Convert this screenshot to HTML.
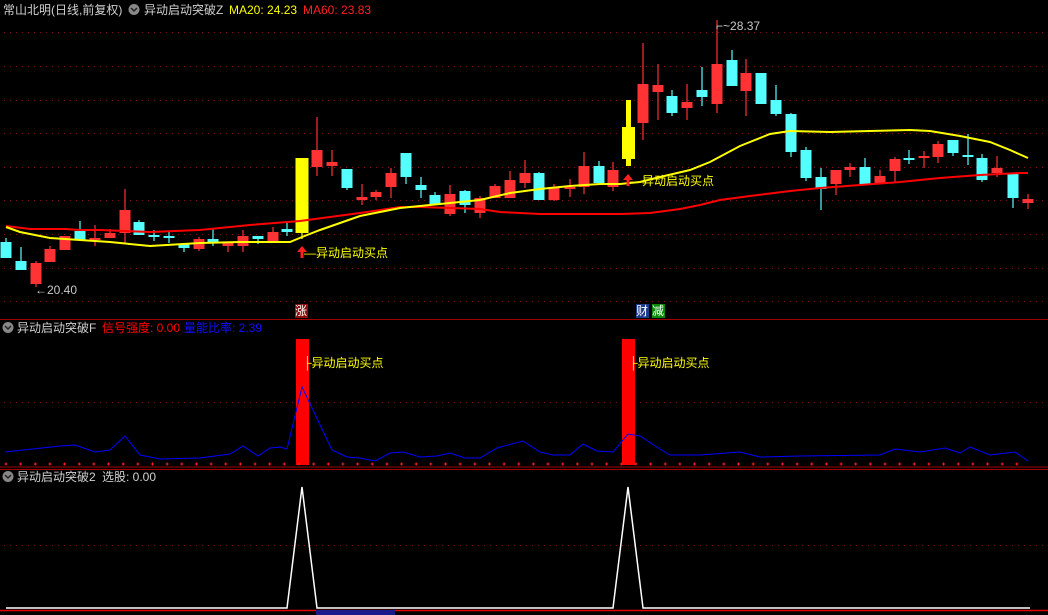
<!DOCTYPE html>
<html><head><meta charset="utf-8"><style>
html,body{margin:0;padding:0;background:#000;width:1048px;height:615px;overflow:hidden}
svg{display:block}
text{font-family:"Liberation Sans","Noto Sans CJK SC",sans-serif;font-size:12px}
</style></head><body>
<svg id="s" width="1048" height="615" xmlns="http://www.w3.org/2000/svg">
<g id="grid" stroke="#8a1010" stroke-width="1" stroke-dasharray="1,5">
<line x1="4" y1="32.5" x2="1048" y2="32.5"/><line x1="4" y1="66.5" x2="1048" y2="66.5"/>
<line x1="4" y1="100.5" x2="1048" y2="100.5"/><line x1="4" y1="133.5" x2="1048" y2="133.5"/>
<line x1="4" y1="167.5" x2="1048" y2="167.5"/><line x1="4" y1="200.5" x2="1048" y2="200.5"/>
<line x1="4" y1="234.5" x2="1048" y2="234.5"/><line x1="4" y1="268.5" x2="1048" y2="268.5"/>
<line x1="4" y1="301.5" x2="1048" y2="301.5"/>
<line x1="4" y1="402.5" x2="1048" y2="402.5"/>
<line x1="4" y1="545.5" x2="1048" y2="545.5"/>
</g>
<line x1="0" y1="319.5" x2="1048" y2="319.5" stroke="#a00000"/>
<line x1="0" y1="469.5" x2="1048" y2="469.5" stroke="#a00000"/>
<line x1="0" y1="610.5" x2="1048" y2="610.5" stroke="#e00000" stroke-width="1.5"/>
<line x1="0" y1="467" x2="1048" y2="467" stroke="#a00000"/>
<g id="c"></g>
<polyline fill="none" stroke="#ff0000" stroke-width="2" points="6,226 30,229 65,229 80,230 100,230 150,232 200,230 250,225 300,221 330,217 360,213 400,207 420,207 450,208 480,209 500,212 540,214 600,214 620,214 650,213 680,209 700,205 720,200 750,196 790,191 820,188 860,185 900,182 940,178 980,175 1020,173 1028,173"/>
<polyline fill="none" stroke="#ffff00" stroke-width="2" points="6,227 20,232 50,238 80,240 110,242 150,246 200,243 240,242 290,242 302,237 320,230 340,223 360,216 380,212 400,208 430,205 450,203 480,200 510,193 540,189 570,186 600,184 620,184 640,182 660,177 690,170 710,162 740,146 770,134 790,131 830,132 870,131 910,130 930,131 960,136 990,142 1010,150 1028,158"/>
<rect x="296" y="339" width="13" height="126" fill="#ff0000"/>
<rect x="622" y="339" width="13" height="126" fill="#ff0000"/>
<polyline fill="none" stroke="#0000ff" stroke-width="1" points="5,452 60,446 75,445 95,452 110,450 125,436 140,455 160,459 200,458 230,454 243,446 258,456 270,448 280,447 287,449 302,387 332,450 347,457 360,458 375,461 390,453 403,452 420,457 437,456 450,453 465,458 480,458 497,448 523,441 540,452 553,455 570,455 583,444 597,451 613,452 628,434 640,436 660,449 670,455 700,455 740,452 760,457 800,456 880,455 895,449 920,452 945,448 960,453 970,447 990,455 1015,452 1028,461"/>
<g id="plus" fill="#ff2020"></g>
<polyline fill="none" stroke="#ffffff" stroke-width="1.5" points="6,608 287,608 302,487 317,608 613,608 628,487 643,608 1030,608"/>
<rect x="316" y="610" width="79" height="5" fill="#1a1a8a"/>
<text x="3" y="14" fill="#d0d0d0">常山北明(日线,前复权)</text>
<circle cx="134" cy="9.5" r="5.5" fill="#888"/><path d="M131,8 L134,11 L137,8" stroke="#222" stroke-width="1.5" fill="none"/>
<text x="144" y="14" fill="#d0d0d0">异动启动突破Z</text>
<text x="229" y="14" fill="#ffff00">MA20: 24.23</text>
<text x="303" y="14" fill="#ff2020">MA60: 23.83</text>
<circle cx="8" cy="327.5" r="5.5" fill="#888"/><path d="M5,326 L8,329 L11,326" stroke="#222" stroke-width="1.5" fill="none"/>
<text x="17" y="332" fill="#d0d0d0">异动启动突破F</text>
<text x="102" y="332" fill="#ff0000">信号强度: 0.00</text>
<text x="184" y="332" fill="#1010ff">量能比率: 2.39</text>
<circle cx="8" cy="476.5" r="5.5" fill="#888"/><path d="M5,475 L8,478 L11,475" stroke="#222" stroke-width="1.5" fill="none"/>
<text x="17" y="481" fill="#d0d0d0">异动启动突破2</text>
<text x="102" y="481" fill="#d0d0d0">选股: 0.00</text>
<text x="35" y="294" fill="#c8c8c8">←20.40</text>
<text x="716" y="30" fill="#c8c8c8">⌐~28.37</text>
<path d="M302,246 L297,252 L300.5,252 L300.5,258 L303.5,258 L303.5,252 L307,252 Z" fill="#ff2020"/>
<text x="304" y="257" fill="#ffff00">—异动启动买点</text>
<path d="M628,174 L623,180 L626.5,180 L626.5,186 L629.5,186 L629.5,180 L633,180 Z" fill="#ff2020"/>
<text x="630" y="185" fill="#ffff00">—异动启动买点</text>
<text x="303" y="367" fill="#ffff00">├异动启动买点</text>
<text x="629" y="367" fill="#ffff00">├异动启动买点</text>
<rect x="295" y="304" width="13" height="14" fill="#8a1010"/><text x="295" y="315" fill="#fff">涨</text>
<rect x="636" y="304" width="13" height="14" fill="#1a3a8a"/><text x="636" y="315" fill="#fff">财</text>
<rect x="652" y="304" width="13" height="14" fill="#0a8a0a"/><text x="652" y="315" fill="#fff">减</text>
</svg>
<script>
var d=[[6,242,258,238,258,'c'],[21,261,270,247,270,'c'],[36,263,284,261,287,'r'],[50,249,262,246,262,'r'],[65,236,250,236,250,'r'],[80,231,240,221,240,'c'],[95,238,240,225,246,'r'],[110,233,238,229,238,'r'],[125,210,233,189,244,'r'],[139,222,235,220,235,'c'],[154,235,237,230,241,'c'],[169,236,238,231,243,'c'],[184,244,248,244,252,'c'],[199,239,249,237,251,'r'],[213,239,243,229,246,'c'],[228,243,246,243,252,'r'],[243,236,246,230,252,'r'],[258,236,239,236,244,'c'],[273,232,243,227,243,'r'],[287,229,232,222,236,'c'],[302,158,233,158,239,'y'],[317,150,167,117,176,'r'],[332,162,166,150,176,'r'],[347,169,188,169,190,'c'],[362,197,200,184,205,'r'],[376,192,197,190,200,'r'],[391,173,187,168,198,'r'],[406,153,177,153,184,'c'],[421,185,190,177,198,'c'],[435,195,204,192,204,'c'],[450,194,214,185,216,'r'],[465,191,205,190,213,'c'],[480,198,213,196,218,'r'],[495,186,198,184,198,'r'],[510,180,198,171,198,'r'],[525,173,183,160,188,'r'],[539,173,200,172,200,'c'],[554,187,200,184,201,'r'],[570,187,189,179,197,'r'],[584,166,187,152,194,'r'],[599,166,183,161,184,'c'],[613,170,187,162,191,'r'],[643,84,123,43,140,'r'],[658,85,92,64,120,'r'],[672,96,113,90,116,'c'],[687,102,108,84,120,'r'],[702,90,97,67,106,'c'],[717,64,104,20,113,'r'],[732,60,86,50,86,'c'],[746,73,91,59,116,'r'],[761,73,104,73,104,'c'],[776,100,114,85,116,'c'],[791,114,152,113,157,'c'],[806,150,178,147,181,'c'],[821,177,189,168,210,'c'],[836,170,184,170,195,'r'],[850,167,170,163,177,'r'],[865,167,184,158,184,'c'],[880,176,184,170,184,'r'],[895,159,171,157,182,'r'],[909,158,160,150,164,'c'],[924,156,158,151,168,'r'],[938,144,157,141,163,'r'],[953,140,153,140,156,'c'],[968,155,157,134,165,'c'],[982,158,180,154,182,'c'],[997,168,173,156,177,'r'],[1013,174,198,174,208,'c'],[1028,199,203,194,209,'r']];
var col={r:'#ff3333',c:'#55ffff',y:'#ffff00'};var h='';
d.forEach(function(a){var c=col[a[5]];h+='<line x1="'+a[0]+'" y1="'+a[3]+'" x2="'+a[0]+'" y2="'+a[4]+'" stroke="'+c+'" stroke-width="1.2"/>';var w=a[5]=='y'?13:11;h+='<rect x="'+(a[0]-w/2)+'" y="'+a[1]+'" width="'+w+'" height="'+Math.max(2,a[2]-a[1])+'" fill="'+c+'"/>';});
h+='<rect x="626" y="100" width="5" height="66" fill="#ffff00"/><rect x="622" y="127" width="13" height="32" fill="#ffff00"/>';
document.getElementById('c').innerHTML=h;
var p='';for(var x=6;x<1030;x+=14.65){p+='<rect x="'+(x-1.5)+'" y="463.5" width="3" height="1" /><rect x="'+(x-0.5)+'" y="462.5" width="1" height="3"/>';}
document.getElementById('plus').innerHTML=p;
</script>
</body></html>
